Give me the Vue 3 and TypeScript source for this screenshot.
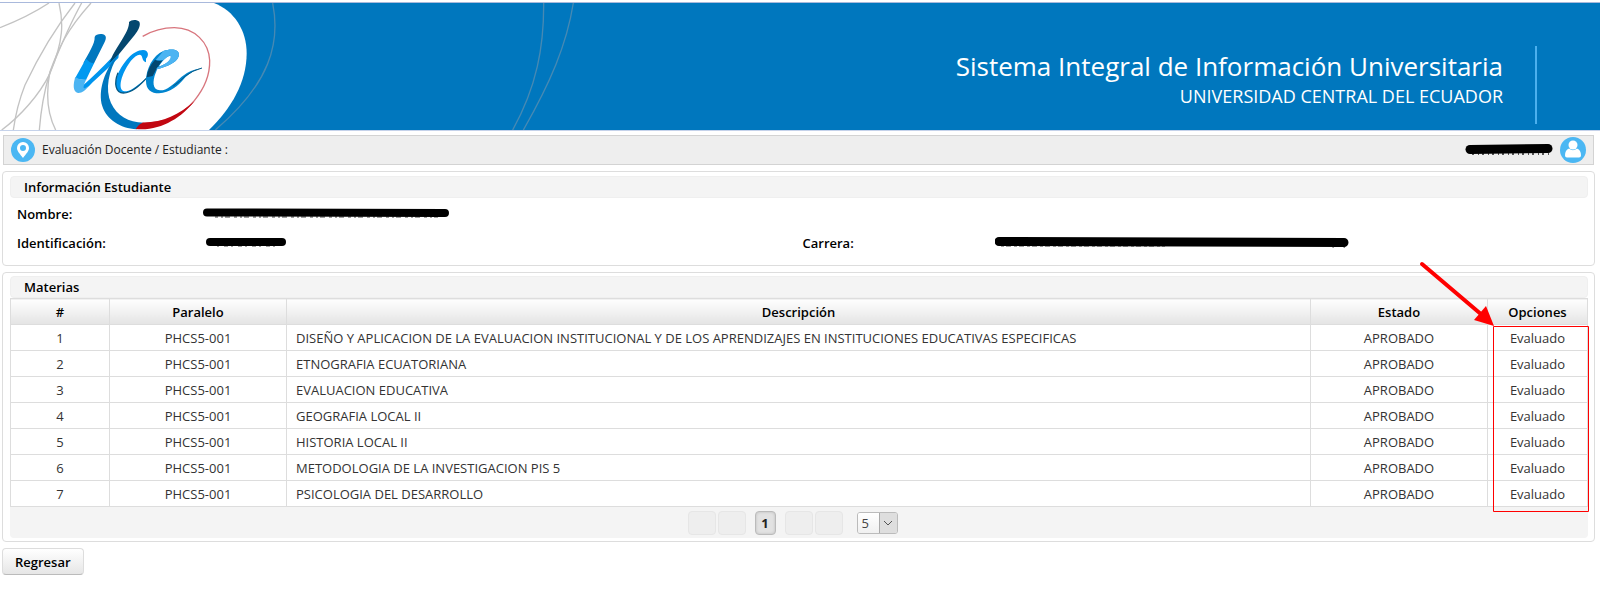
<script setup lang="ts">
import { ref } from 'vue'

interface Subject {
  id: number
  group: string
  name: string
  state: string
  option: string
}

const names: string[] = [
  'DISEÑO Y APLICACION DE LA EVALUACION INSTITUCIONAL Y DE LOS APRENDIZAJES EN INSTITUCIONES EDUCATIVAS ESPECIFICAS',
  'ETNOGRAFIA ECUATORIANA',
  'EVALUACION EDUCATIVA',
  'GEOGRAFIA LOCAL II',
  'HISTORIA LOCAL II',
  'METODOLOGIA DE LA INVESTIGACION PIS 5',
  'PSICOLOGIA DEL DESARROLLO',
]

const subjects: Subject[] = names.map((name, i) => ({
  id: i + 1,
  group: 'PHCS5-001',
  name,
  state: 'APROBADO',
  option: 'Evaluado',
}))

const pageSize = ref('5')
</script>

<template>
  <div class="page">
    <header class="banner">
      <svg class="art" viewBox="0 9 1800 381" aria-hidden="true">
        <path d="M0 9H642C702 32 740 90 740 160C740 245 695 325 627 390H0Z" fill="#fff" />
        <g fill="none" stroke="#c3c3c3" stroke-width="4">
          <path d="M0 83Q85 50 147 9" />
          <path d="M177 9C190 65 192 120 150 220C118 285 60 350 5 390" />
          <path d="M225 9C165 85 115 170 75 255Q50 318 40 390" />
          <path d="M245 9C205 80 175 155 148 222Q125 300 118 390" />
          <path d="M273 9C200 90 175 145 150 215C136 285 142 340 167 390" />
        </g>
        <g fill="none" stroke="#6d93ad" stroke-opacity=".65" stroke-width="4">
          <path d="M818 9C842 130 810 250 646 390" />
          <path d="M1631 9C1632 140 1610 260 1538 390" />
          <path d="M1720 9C1700 135 1650 250 1570 390" />
        </g>
        <path d="M284 111C287 103 299 101 309 103C320 106 319 116 314 126L281 192L250 190C265 160 285 132 284 111Z" fill="#0077be" />
        <path d="M258 176Q272 192 283 188L258 240L224 237Z" fill="#0099f0" />
        <path d="M248 257Q295 215 332 176L358 151L355 174Q315 214 278 247Q254 274 240 276Z" fill="#0095ee" />
        <path d="M226 231Q243 243 259 238C251 255 247 268 256 264L264 259Q252 280 234 279C218 276 219 252 226 231Z" fill="#4cb4f2" />
        <path d="M387 66C394 58 411 58 418 65C423 76 415 91 404 105L358 161L328 190L338 166C356 132 389 91 387 66Z" fill="#04476f" />
        <path d="M358 159C324 213 315 269 333 309C351 348 385 367 431 368L410 388C360 386 320 358 307 319C293 272 314 218 339 182Z" fill="#0077be" />
        <path d="M427 369C490 371 544 348 583 302C615 263 630 220 629 181C626 127 585 84 523 83C488 83 454 94 428 109" fill="none" stroke="#d8757d" stroke-width="4" />
        <path d="M429 368C493 366 535 345 584 303C542 355 481 394 407 387Q417 371 429 368Z" fill="#c20711" />
        <path d="M438 176C447 168 447 151 429 150C399 150 369 188 354 222C341 251 347 279 370 279C396 279 419 257 441 233C417 252 398 271 379 274C356 276 359 247 371 219C382 194 403 163 420 164C430 166 423 181 438 187Z" fill="#0095ee" />
        <path d="M354 218C341 250 347 279 370 279C396 279 419 257 441 233" fill="none" stroke="#075984" stroke-width="4" />
        <path d="M461 210C494 203 535 188 537 164C537 147 513 145 490 153C459 166 438 207 438 243C438 270 454 280 477 280C509 279 536 257 556 232Q575 213 606 204Q570 209 545 230C519 254 499 272 480 271C457 270 457 244 467 219C477 192 501 164 514 168C520 174 501 196 461 204Z" fill="#0085cf" />
        <path d="M520 258Q540 245 556 228Q578 211 606 204" fill="none" stroke="#075984" stroke-width="3" />
        <path d="M461 210C494 203 535 188 537 164C537 147 513 145 490 153L467 181H489L506 168C516 164 513 179 498 190Q482 201 463 205Z" fill="#4cb4f2" />
        <path d="M465 179Q478 186 488 181Q470 202 458 228L440 232Q443 203 465 179Z" fill="#04476f" />
      </svg>
      <div class="titles">
        <h1>Sistema Integral de Información Universitaria</h1>
        <p>UNIVERSIDAD CENTRAL DEL ECUADOR</p>
      </div>
    </header>

    <nav class="crumbs" aria-label="Ubicación">
      <svg class="pin" viewBox="0 0 24 24" aria-hidden="true">
        <circle cx="12" cy="12" r="12" fill="#4bb7f3" />
        <path fill="#fff" fill-rule="evenodd" d="M12 4a6 6 0 0 0-6 6c0 3 3 6 6 10c3-4 6-7 6-10a6 6 0 0 0-6-6Zm0 3a3 3 0 1 1 0 6a3 3 0 0 1 0-6Z" />
      </svg>
      <span class="trail">Evaluación Docente / Estudiante :</span>
      <svg class="mark user-mark" viewBox="0 0 88 12" aria-hidden="true">
        <path d="M7 10H86" stroke="#555" stroke-width="2" stroke-dasharray="2 4 1 3" />
        <path d="M5 5.5L83 4.5" stroke="#000" stroke-width="9" stroke-linecap="round" />
      </svg>
      <svg class="user" viewBox="0 0 26 26" aria-hidden="true">
        <circle cx="13" cy="13" r="13" fill="#4bb7f3" />
        <circle cx="13" cy="8" r="4.5" fill="#fff" />
        <path fill="#fff" d="M9 11.5Q13 15 17 11.5Q21 13 21 18.5Q21 20.5 19 20.5H7Q5 20.5 5 18.5Q5 13 9 11.5Z" />
      </svg>
    </nav>

    <section class="panel">
      <h2>Información Estudiante</h2>
      <dl class="info">
        <dt>Nombre:</dt>
        <dd class="wide">
          <svg class="mark name-mark" viewBox="0 0 246 12" aria-hidden="true">
            <path d="M12 9H235" stroke="#444" stroke-width="1" stroke-dasharray="3 3 2 2 5 4" />
            <path d="M4 4.5L242 5" stroke="#000" stroke-width="8" stroke-linecap="round" />
          </svg>
        </dd>
        <dt>Identificación:</dt>
        <dd>
          <svg class="mark id-mark" viewBox="0 0 84 12" aria-hidden="true">
            <path d="M14 9H76" stroke="#444" stroke-width="1" stroke-dasharray="2 5 4 3" />
            <path d="M7 5H79" stroke="#000" stroke-width="8" stroke-linecap="round" />
          </svg>
        </dd>
        <dt>Carrera:</dt>
        <dd>
          <svg class="mark career-mark" viewBox="0 0 354 12" aria-hidden="true">
            <path d="M6 9H170M338 8Q337 11 340 12M349 8Q350 11 348 12" fill="none" stroke="#444" stroke-width="1" stroke-dasharray="3 2 5 3" />
            <path d="M4 4.5L349 5.5" stroke="#000" stroke-width="9" stroke-linecap="round" />
          </svg>
        </dd>
      </dl>
    </section>

    <section class="panel subjects">
      <h2>Materias</h2>
      <table>
        <colgroup>
          <col class="c-id" /><col class="c-mid" /><col /><col class="c-mid" /><col class="c-opt" />
        </colgroup>
        <thead>
          <tr>
            <th scope="col">#</th>
            <th scope="col">Paralelo</th>
            <th scope="col">Descripción</th>
            <th scope="col">Estado</th>
            <th scope="col">Opciones</th>
          </tr>
        </thead>
        <tbody>
          <tr v-for="s in subjects" :key="s.id">
            <td>{{ s.id }}</td>
            <td>{{ s.group }}</td>
            <td class="name">{{ s.name }}</td>
            <td>{{ s.state }}</td>
            <td>{{ s.option }}</td>
          </tr>
        </tbody>
      </table>
      <div class="pager">
        <button type="button" class="step" disabled aria-label="Primera página"></button>
        <button type="button" class="step" disabled aria-label="Página anterior"></button>
        <button type="button" class="current" aria-current="page">1</button>
        <button type="button" class="step" disabled aria-label="Página siguiente"></button>
        <button type="button" class="step" disabled aria-label="Última página"></button>
        <span class="size">
          <select v-model="pageSize" aria-label="Filas por página">
            <option>5</option>
            <option>10</option>
          </select>
          <svg viewBox="0 0 18 20" aria-hidden="true">
            <path d="M0 0H18V20H0Z" fill="#dedede" />
            <path d="M.5 0V20" stroke="#aaa" />
            <path d="M5 8L9 12L13 8" fill="none" stroke="#555" />
          </svg>
        </span>
      </div>
      <svg class="callout" viewBox="0 0 172 252" aria-hidden="true">
        <path d="M5 4L65 55" stroke="#f00" stroke-width="4" stroke-linecap="round" />
        <path d="M77 66L57 60L69 46Z" fill="#f00" />
        <path d="M76.5 66.5H171.5V251.5H76.5Z" fill="none" stroke="#f00" />
      </svg>
    </section>

    <button type="button" class="back">Regresar</button>
  </div>
</template>

<style>
body {
  margin: 0;
  background: #fff;
}
</style>

<style scoped>
* {
  box-sizing: border-box;
}

.page {
  padding-top: 2px;
  font-family: "Open Sans", "Noto Sans", sans-serif;
  font-size: 13px;
  line-height: 18px;
  color: #333;
}

h1,
h2,
p,
dl,
dd {
  margin: 0;
}

button,
select {
  font: inherit;
}

.banner {
  display: flex;
  justify-content: space-between;
  align-items: flex-start;
  height: 129px;
  padding-right: 63px;
  background: #0077be;
  border-top: 1px solid #a9b9dc;
  border-bottom: 1px solid #c5d2ea;
}

.art {
  flex: none;
  width: 600px;
  height: 127px;
}

.titles {
  margin-top: 43px;
  padding-right: 32px;
  height: 78px;
  border-right: 2px solid #4bb0ee;
  color: #fff;
  text-align: right;
}

.titles h1 {
  font-size: 26px;
  font-weight: 400;
  line-height: 40px;
}

.titles p {
  font-size: 18px;
  line-height: 20px;
}

.crumbs {
  display: flex;
  align-items: center;
  height: 30px;
  margin: 4px 6px 6px 3px;
  padding: 0 7px;
  background: #eee;
  border: 1px solid #d3d3d3;
}

.pin {
  width: 24px;
  height: 24px;
}

.trail {
  margin-left: 7px;
  margin-right: auto;
  color: #222;
  font-size: 12px;
}

.mark {
  display: block;
  height: 12px;
}

.user-mark {
  width: 88px;
  margin-right: 7px;
}

.user {
  width: 26px;
  height: 26px;
}

.name-mark {
  width: 246px;
}

.id-mark {
  width: 84px;
}

.career-mark {
  width: 354px;
}

.panel {
  position: relative;
  margin: 0 5px 6px 2px;
  padding: 4px 6px 3px 7px;
  border: 1px solid #ddd;
  border-radius: 4px;
}

.subjects {
  padding-top: 3px;
}

.panel h2 {
  height: 22px;
  padding: 0 13px;
  background: #f4f4f4;
  border: 1px solid #efefef;
  border-radius: 4px;
  color: #000;
  font-size: 13px;
  font-weight: 600;
  line-height: 20px;
}

.info {
  display: grid;
  grid-template-columns: 186px calc(50% - 186px) 192px 1fr;
  grid-auto-rows: 29px;
  align-items: center;
  padding: 1px 0 5px 7px;
}

.info dt {
  color: #000;
  font-weight: 600;
}

.info .wide {
  grid-column: span 3;
}

table {
  width: 100%;
  table-layout: fixed;
  border-collapse: collapse;
}

.c-id {
  width: 99px;
}

.c-mid {
  width: 177px;
}

.c-opt {
  width: 100px;
}

th,
td {
  height: 26px;
  padding: 0 9px;
  border: 1px solid #ddd;
  text-align: center;
  white-space: nowrap;
}

th {
  background: linear-gradient(#fefefe, #e4e4e4);
  color: #000;
  font-weight: 600;
}

td.name {
  text-align: left;
}

.pager {
  display: flex;
  justify-content: center;
  align-items: center;
  gap: 2px;
  height: 31px;
  padding-right: 13px;
  background: #f4f4f4;
  border-radius: 0 0 4px 4px;
}

.pager button {
  height: 24px;
  padding: 0;
  border-radius: 4px;
}

.step {
  width: 28px;
  background: #eee;
  border: 1px solid #e6e6e6;
}

.pager .current {
  width: 21px;
  margin: 0 7px;
  background: #e2e2e2;
  border: 1px solid #bbb;
  box-shadow: inset 0 0 3px #bbb;
  color: #222;
  font-weight: 700;
}

.size {
  display: flex;
  margin-left: 12px;
  width: 41px;
  height: 22px;
  border: 1px solid #bbb;
  border-radius: 3px;
  overflow: hidden;
}

.size select {
  flex: 1;
  min-width: 0;
  padding: 0 4px;
  appearance: none;
  border: 0;
  background: linear-gradient(#fff, #f0f0f0);
  color: #444;
}

.size svg {
  flex: none;
  width: 18px;
  height: 20px;
  pointer-events: none;
}

.callout {
  position: absolute;
  top: -13px;
  right: 5px;
  width: 172px;
  height: 252px;
  pointer-events: none;
}

.back {
  display: block;
  margin-left: 2px;
  padding: 0 12px;
  height: 27px;
  background: linear-gradient(#fff, #e6e6e6);
  border: 1px solid #ddd;
  border-bottom-color: #bbb;
  border-radius: 4px;
  color: #000;
  font-weight: 600;
}
</style>
